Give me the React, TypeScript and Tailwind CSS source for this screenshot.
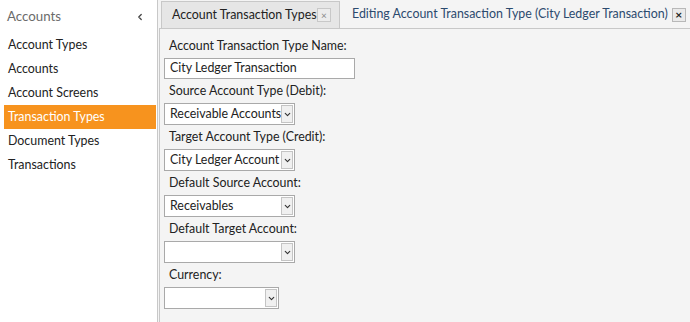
import { ChevronLeft, ChevronDown } from 'lucide-react';

const menu = ['Account Types', 'Accounts', 'Account Screens', 'Transaction Types', 'Document Types', 'Transactions'];

function SelectBox({ value, width }: { value: string; width: string }) {
  return (
    <div className={`${width} h-[22px] bg-white border border-[#a9a9a9] flex items-center`}>
      <span className="flex-1 pl-[5px] text-[12.4px] text-[#222] whitespace-nowrap overflow-hidden">{value}</span>
      <div className="w-[12px] h-[18px] mr-[1px] border border-[#c4c4c4] bg-[#f0f0f0] flex items-center justify-center">
        <ChevronDown className="w-[9px] h-[9px] text-[#333]" strokeWidth={3} />
      </div>
    </div>
  );
}

function Field({ label, children }: { label: string; children: React.ReactNode }) {
  return (
    <div className="flex flex-col">
      <div className="h-[24px] pl-[5px] flex items-center text-[12.4px] text-[#222] whitespace-nowrap">{label}</div>
      {children}
    </div>
  );
}

export default function App() {
  return (
    <div className="w-[690px] h-[322px] flex bg-[#f4f4f4] overflow-hidden" style={{ fontFamily: 'Lato, sans-serif' }}>
      <div className="w-[158px] shrink-0 h-full bg-white border-r border-[#c8c8c8] flex flex-col">
        <div className="h-[33px] pl-[7px] pr-[12px] flex items-center justify-between">
          <span className="text-[13.3px] text-[#6b6b6b]">Accounts</span>
          <ChevronLeft className="w-[10px] h-[10px] text-[#444]" strokeWidth={3} />
        </div>
        <div className="flex flex-col">
          {menu.map((m) => (
            <div
              key={m}
              className={`h-[24px] ml-[4px] mr-[1px] pl-[4px] flex items-center text-[12.4px] ${
                m === 'Transaction Types' ? 'bg-[#f7931e] text-white' : 'text-[#222]'
              }`}
            >
              {m}
            </div>
          ))}
        </div>
      </div>

      <div className="flex-1 min-w-0 ml-[1px] flex flex-col">
        <div className="h-[28px] flex items-end">
          <div className="ml-[2px] h-[27px] w-[179px] shrink-0 bg-[#e6e6e6] border border-[#c8c8c8] border-b-0 flex items-center pl-[10px] pr-[8px] justify-between">
            <span className="text-[12.4px] text-[#222] whitespace-nowrap">Account Transaction Types</span>
            <span className="w-[14px] h-[14px] border border-[#c8c8c8] bg-[#ececec] text-[10px] leading-none text-[#888] flex items-center justify-center">×</span>
          </div>
          <div className="h-[27px] pl-[12px] flex items-center gap-[4px]">
            <span className="text-[12.4px] text-[#2c4a6e] whitespace-nowrap">Editing Account Transaction Type (City Ledger Transaction)</span>
            <span className="w-[14px] h-[14px] border border-[#b8b8b8] bg-[#eaeaea] text-[12px] font-bold leading-none text-[#222] flex items-center justify-center">×</span>
          </div>
        </div>
        <div className="flex-1 border-l border-t border-[#c8c8c8] pl-[4px] pt-[5px] flex flex-col">
          <Field label="Account Transaction Type Name:">
            <div className="w-[191px] h-[21px] bg-white border border-[#a9a9a9] pl-[5px] flex items-center text-[12.4px] text-[#222] whitespace-nowrap">
              City Ledger Transaction
            </div>
          </Field>
          <Field label="Source Account Type (Debit):">
            <SelectBox value="Receivable Accounts" width="w-[131px]" />
          </Field>
          <Field label="Target Account Type (Credit):">
            <SelectBox value="City Ledger Account" width="w-[131px]" />
          </Field>
          <Field label="Default Source Account:">
            <SelectBox value="Receivables" width="w-[131px]" />
          </Field>
          <Field label="Default Target Account:">
            <SelectBox value="" width="w-[131px]" />
          </Field>
          <Field label="Currency:">
            <SelectBox value="" width="w-[115px]" />
          </Field>
        </div>
      </div>
    </div>
  );
}
